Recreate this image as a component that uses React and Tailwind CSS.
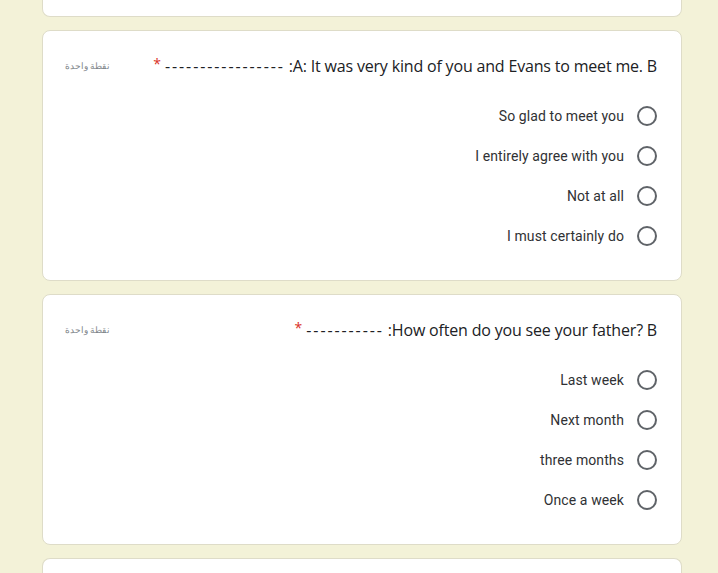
import React from "react";

function Radio() {
  return <div className="w-[20px] h-[20px] rounded-full border-2 border-[#5f6368] shrink-0" />;
}

function Option({ label }) {
  return (
    <div className="h-[40px] flex items-center justify-end gap-[13px]">
      <span className="text-[14px] text-[#303134] font-['Roboto',sans-serif] tracking-[0.1px]">{label}</span>
      <Radio />
    </div>
  );
}

function Question({ dashes, text, options }) {
  return (
    <div className="h-[251px] bg-white border border-[#dedcc8] rounded-lg pt-[23px] pl-[22px] pr-[24px]">
      <div className="h-[24px] flex items-center justify-between">
        <span dir="rtl" className="text-[9px] text-[#80868b] font-['Noto_Sans',sans-serif]">نقطة واحدة</span>
        <div className="flex items-center font-['Open_Sans',sans-serif] text-[16px] text-[#202124] whitespace-pre">
          <span className="text-[#d93025] text-[14px] relative -top-[3px] mr-[4px]">*</span>
          <span className="tracking-[1.9px]">{dashes}</span>
          <span className="ml-[4px] tracking-[-0.18px]">:{text}</span>
        </div>
      </div>
      <div className="mt-[18px] flex flex-col">
        {options.map((o) => (
          <Option key={o} label={o} />
        ))}
      </div>
    </div>
  );
}

export default function App() {
  return (
    <div className="w-[718px] h-[573px] overflow-hidden bg-[#f3f2d8]">
      <div className="ml-[42px] w-[640px] flex flex-col gap-[13px]">
        <div className="h-[17px] bg-white border border-t-0 border-[#dedcc8] rounded-b-lg" />
        <Question
          dashes="-----------------"
          text="A: It was very kind of you and Evans to meet me. B"
          options={["So glad to meet you", "I entirely agree with you", "Not at all", "I must certainly do"]}
        />
        <Question
          dashes="-----------"
          text="How often do you see your father? B"
          options={["Last week", "Next month", "three months", "Once a week"]}
        />
        <div className="h-[40px] bg-white border border-b-0 border-[#dedcc8] rounded-t-lg" />
      </div>
    </div>
  );
}
